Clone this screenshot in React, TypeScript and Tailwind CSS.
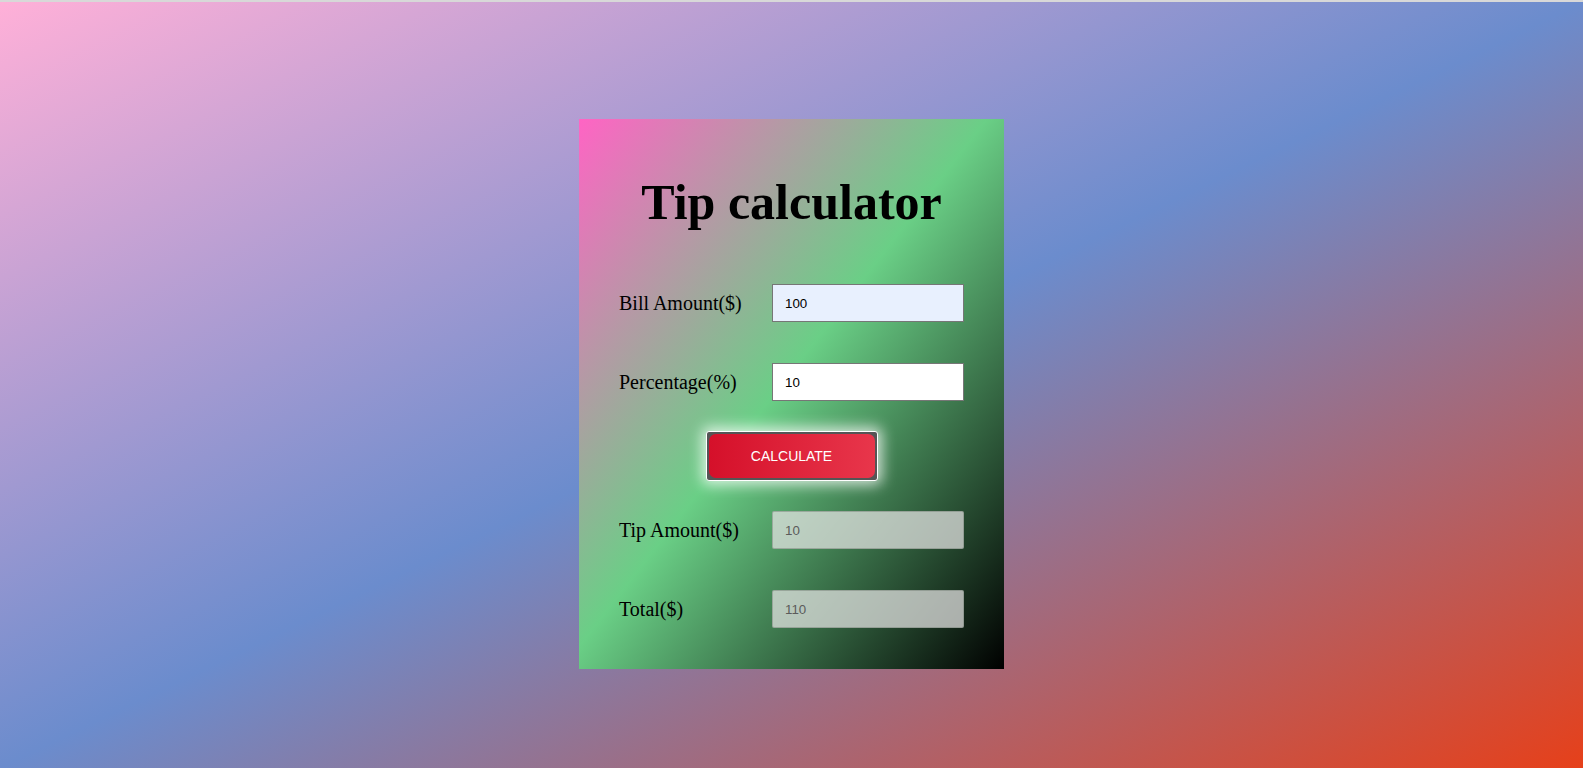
const rows = [
  { label: "Bill Amount($)", value: "100", kind: "filled" },
  { label: "Percentage(%)", value: "10", kind: "plain" },
];

const results = [
  { label: "Tip Amount($)", value: "10" },
  { label: "Total($)", value: "110" },
];

function Row({ label, children, className = "" }: { label: string; children: React.ReactNode; className?: string }) {
  return (
    <div className={`flex items-center justify-between h-[38px] ${className}`}>
      <label className="text-[20px] text-black font-['Liberation_Serif',serif]">{label}</label>
      {children}
    </div>
  );
}

export default function App() {
  return (
    <div className="min-h-[768px] w-full border-t-2 border-[#d8d8d8] bg-[linear-gradient(to_bottom_right,#ffb0d8_0%,#6b8ccd_50%,#e6401a_100%)] overflow-hidden">
      <div className="mx-auto mt-[117px] mb-[99px] h-[550px] w-[425px] px-10 pt-[58px] bg-[linear-gradient(to_bottom_right,#ff64c4_0%,#6acf86_48%,#000000_100%)]">
        <h1 className="h-[50px] text-center text-[50px] font-bold leading-none text-black font-['Liberation_Serif',serif]">
          Tip calculator
        </h1>

        <Row label={rows[0].label} className="mt-[57px]">
          <input
            readOnly
            value={rows[0].value}
            className="h-[38px] w-[192px] border border-[#767676] bg-[#e8f0fe] pl-3 text-[13.333px] text-black outline-none font-['Liberation_Sans',sans-serif]"
          />
        </Row>
        <Row label={rows[1].label} className="mt-[41px]">
          <input
            readOnly
            value={rows[1].value}
            className="h-[38px] w-[192px] border border-[#767676] bg-white pl-3 text-[13.333px] text-black outline-none font-['Liberation_Sans',sans-serif]"
          />
        </Row>

        <div className="mt-[30px] flex justify-center">
          <button className="h-[50px] w-[172px] rounded-[3px] border border-white bg-[#555] p-[2px] shadow-[0_0_14px_4px_rgba(255,255,255,0.75)]">
            <span className="flex h-full w-full items-center justify-center rounded-[7px] bg-[linear-gradient(to_right,#d5102a,#e8364b)] text-[14px] text-white font-['Liberation_Sans',sans-serif]">
              CALCULATE
            </span>
          </button>
        </div>

        {results.map((r, i) => (
          <Row key={r.label} label={r.label} className={i === 0 ? "mt-[30px]" : "mt-[41px]"}>
            <input
              disabled
              value={r.value}
              className="h-[38px] w-[192px] rounded-[2px] border border-[rgba(120,130,120,0.5)] bg-[rgba(232,230,230,0.72)] pl-3 text-[13.333px] text-[#5b5b5b] outline-none font-['Liberation_Sans',sans-serif]"
            />
          </Row>
        ))}
      </div>
    </div>
  );
}
